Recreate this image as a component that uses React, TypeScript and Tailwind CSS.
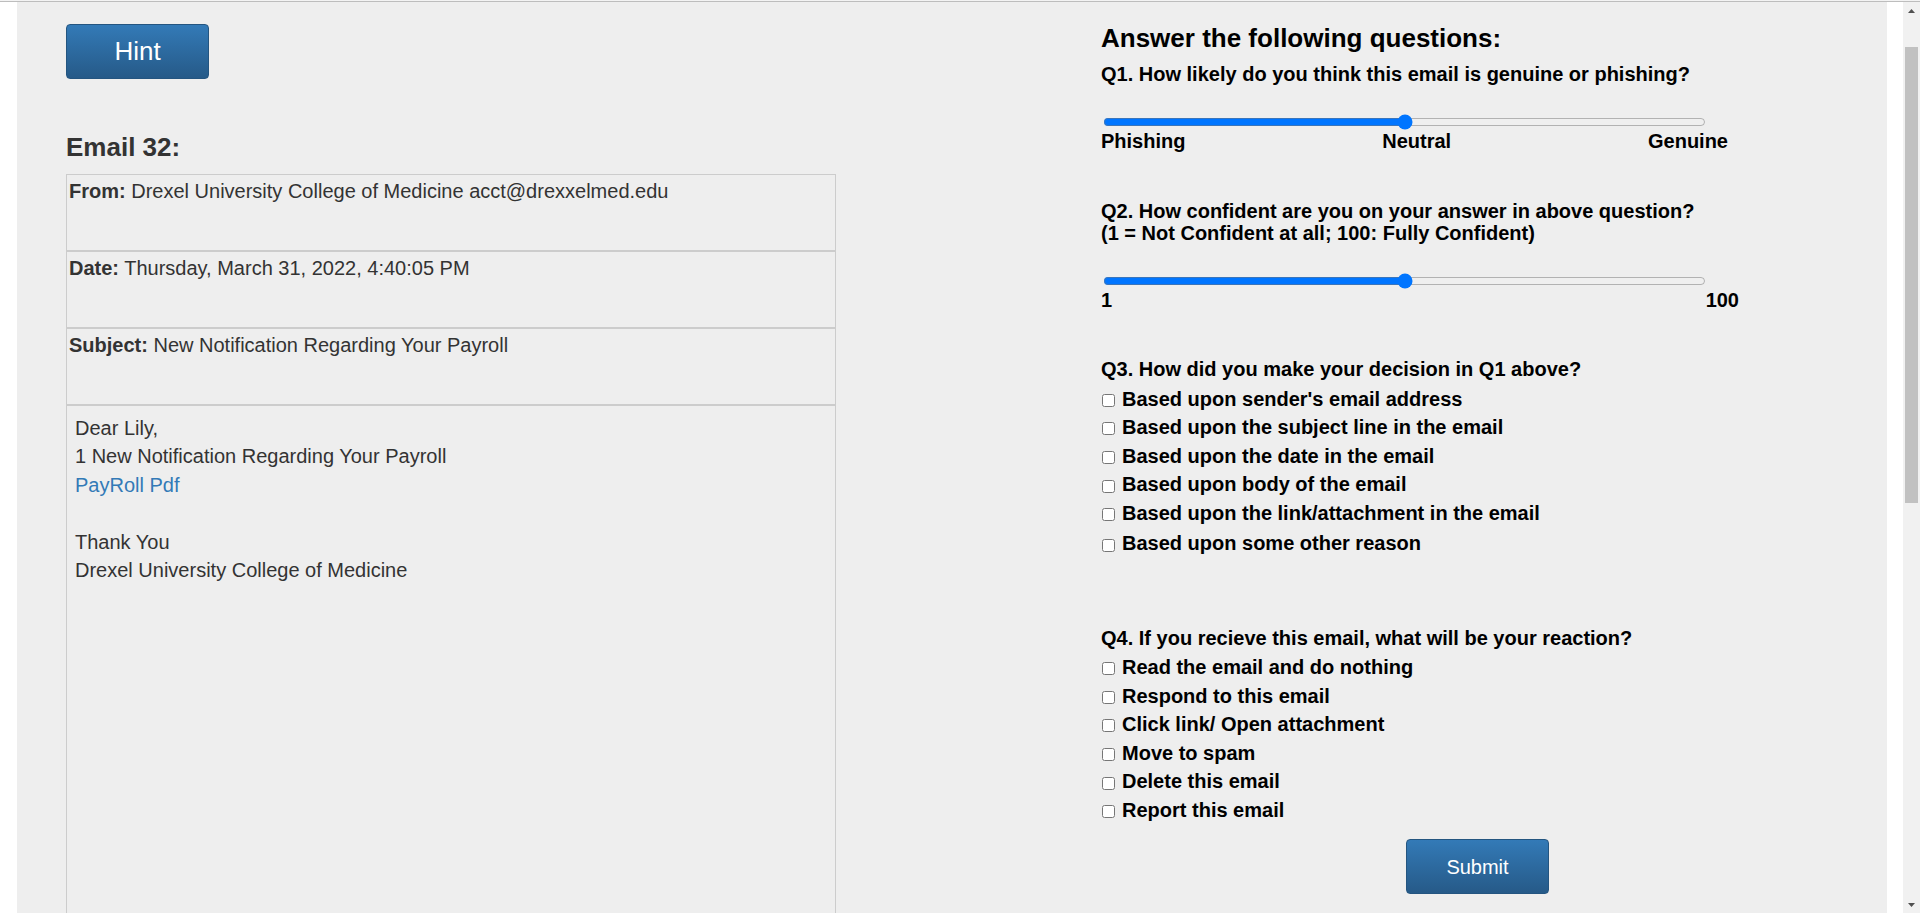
import React from "react";

const q3Options = [
  "Based upon sender's email address",
  "Based upon the subject line in the email",
  "Based upon the date in the email",
  "Based upon body of the email",
  "Based upon the link/attachment in the email",
];

const q4Options = [
  "Read the email and do nothing",
  "Respond to this email",
  "Click link/ Open attachment",
  "Move to spam",
  "Delete this email",
  "Report this email",
];

function CheckItem({ label, className = "" }: { label: string; className?: string }) {
  return (
    <label className={"flex items-center text-[20px] font-bold leading-[28.57px] " + className}>
      <input type="checkbox" className="ml-[1px] mr-[7px] mt-[3px] h-[13px] w-[13px] shrink-0" />
      {label}
    </label>
  );
}

function Scrollbar() {
  return (
    <div className="flex w-[17px] flex-col bg-[#f1f1f1]">
      <div className="flex h-[17px] items-center justify-center">
        <svg width="7" height="4" viewBox="0 0 7 4">
          <polygon points="3.5,0 7,4 0,4" fill="#505050" />
        </svg>
      </div>
      <div className="mx-[2px] mt-[28px] h-[456px] bg-[#c1c1c1]" />
      <div className="flex-1" />
      <div className="flex h-[17px] items-center justify-center">
        <svg width="7" height="4" viewBox="0 0 7 4">
          <polygon points="0,0 7,0 3.5,4" fill="#505050" />
        </svg>
      </div>
    </div>
  );
}

export default function App() {
  return (
    <div className="flex h-[913px] w-[1920px] flex-col overflow-hidden bg-white font-['Liberation_Sans',Arial,sans-serif]">
      <div className="h-[1px] bg-[#f3f3f3]" />
      <div className="h-[1px] bg-[#bdbdbd]" />
      <div className="flex min-h-0 flex-1">
        <div className="w-[17px] bg-white" />
        <main className="flex flex-1 bg-[#eeeeee] pl-[49px]">
          {/* Email column */}
          <div className="w-[770px] shrink-0 text-[#333]">
            <button className="mt-[22px] h-[55px] w-[143px] rounded-[4px] border border-[#245580] bg-linear-to-b from-[#337ab7] to-[#265a88] text-[26px] text-white">
              Hint
            </button>
            <h2 className="mt-[54px] text-[26px] font-bold leading-[1.1]">Email 32:</h2>
            <div className="mt-[12px] text-[20px] leading-[1.42857]">
              <div className="h-[77px] border border-[#cccccc] p-[2px]">
                <b>From:</b> Drexel University College of Medicine acct@drexxelmed.edu
              </div>
              <div className="h-[77px] border border-[#cccccc] p-[2px]">
                <b>Date:</b> Thursday, March 31, 2022, 4:40:05 PM
              </div>
              <div className="h-[77px] border border-[#cccccc] p-[2px]">
                <b>Subject:</b> New Notification Regarding Your Payroll
              </div>
              <div className="h-[700px] border border-[#cccccc] pl-[8px] pt-[8px]">
                <p>Dear Lily,</p>
                <p>1 New Notification Regarding Your Payroll</p>
                <p>
                  <a href="#" className="text-[#337ab7]">PayRoll Pdf</a>
                </p>
                <br />
                <p>Thank You</p>
                <p>Drexel University College of Medicine</p>
              </div>
            </div>
          </div>

          {/* Questions column */}
          <div className="ml-[265px] flex-1 text-black">
            <h3 className="mt-[22px] text-[26px] font-bold leading-[1.1]">Answer the following questions:</h3>
            <p className="mt-[10px] text-[20px] font-bold leading-[22px]">
              Q1. How likely do you think this email is genuine or phishing?
            </p>
            <div className="mt-[29px] flex h-[16px] items-center">
              <input type="range" min={0} max={100} defaultValue={50} className="m-0 ml-[2px] h-[16px] w-[603px]" />
            </div>
            <div className="flex w-[627px] justify-between text-[20px] font-bold leading-[22px]">
              <span>Phishing</span>
              <span>Neutral</span>
              <span>Genuine</span>
            </div>

            <p className="mt-[48px] text-[20px] font-bold leading-[22px]">
              Q2. How confident are you on your answer in above question?
              <br />
              (1 = Not Confident at all; 100: Fully Confident)
            </p>
            <div className="mt-[29px] flex h-[16px] items-center">
              <input type="range" min={1} max={100} step={0.5} defaultValue={50.5} className="m-0 ml-[2px] h-[16px] w-[603px]" />
            </div>
            <div className="flex w-[638px] justify-between text-[20px] font-bold leading-[22px]">
              <span>1</span>
              <span>100</span>
            </div>

            <p className="mt-[47px] text-[20px] font-bold leading-[22px]">Q3. How did you make your decision in Q1 above?</p>
            <div className="mt-[5px]">
              {q3Options.map((o) => (
                <CheckItem key={o} label={o} />
              ))}
              <CheckItem label="Based upon some other reason" className="mt-[2px]" />
            </div>

            <p className="mt-[69px] text-[20px] font-bold leading-[22px]">
              Q4. If you recieve this email, what will be your reaction?
            </p>
            <div className="mt-[4px]">
              {q4Options.map((o) => (
                <CheckItem key={o} label={o} />
              ))}
            </div>
            <button className="ml-[305px] mt-[15px] h-[55px] w-[143px] rounded-[4px] border border-[#245580] bg-linear-to-b from-[#337ab7] to-[#265a88] text-[20px] text-white">
              Submit
            </button>
          </div>
        </main>
        <div className="w-[16px] bg-white" />
        <Scrollbar />
      </div>
    </div>
  );
}
